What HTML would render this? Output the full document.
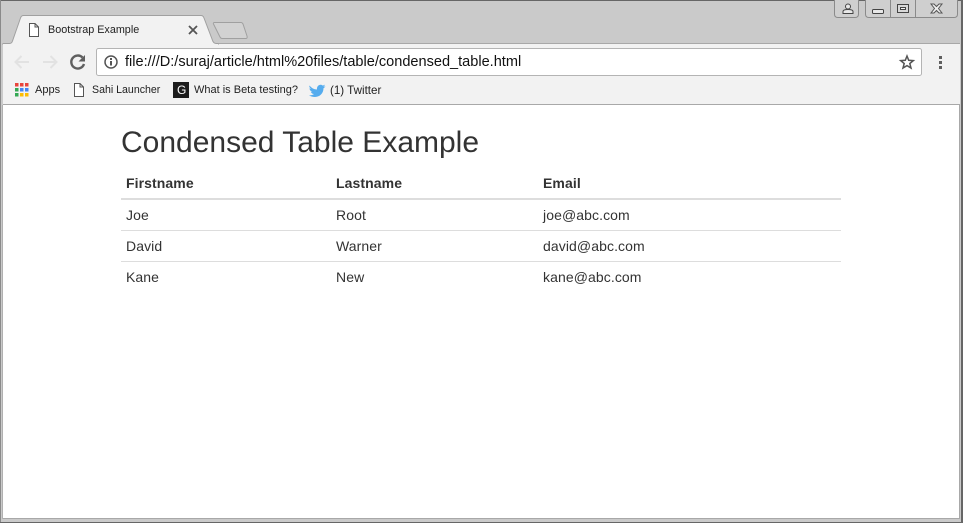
<!DOCTYPE html>
<html><head><meta charset="utf-8"><style>
html,body{margin:0;padding:0;width:964px;height:524px;overflow:hidden;background:#fff}
body{position:relative;font-family:"Liberation Sans",sans-serif}
.t{position:absolute;white-space:nowrap;line-height:1}
.b{color:#222;top:85px}
.c{font-size:14px;color:#333;letter-spacing:.09px}
.h{font-weight:bold}
.l{position:absolute;left:121px;width:720px;background:#ddd;height:1px}
</style></head><body>
<svg width="964" height="524" style="position:absolute;left:0;top:0">
<rect width="964" height="524" fill="#cacaca"/>
<rect x="0" y="0" width="963" height="1" fill="#666"/>
<rect x="0" y="0" width="1" height="523" fill="#8a8a8a"/>
<rect x="961" y="0" width="2" height="523" fill="#666"/>
<rect x="963" y="0" width="1" height="524" fill="#fff"/>
<rect x="3" y="43" width="957" height="62" fill="#f2f2f2"/>
<rect x="3" y="43" width="957" height="1" fill="#a8a8a8"/>
<path d="M3 43.500H9.500C11 43.500 12 42.500 12.500 41L20.500 18C21 16.500 22 15.500 23.500 15.500H201C202.500 15.500 203.500 16.500 204 18L212 39C212.700 41.500 214 43.500 216 43.500H218V44.500H3Z" fill="#f2f2f2" stroke="#a0a0a0"/>
<rect x="3" y="44" width="215" height="3" fill="#f2f2f2"/>
<path d="M214.500 22.500H241C242 22.500 242.500 23 243 24L247 36C247.500 37.500 247 38.500 246 38.500H222C221 38.500 220.500 38 220 37L213.500 24C213 23 213.500 22.500 214.500 22.500Z" fill="#d2d2d2" stroke="#a0a0a0"/>
<path d="M834.500 0V14C834.500 16.500 836 17.500 838 17.500H855C857 17.500 858.500 16.500 858.500 14V0" fill="#cfcfcf" stroke="#8a8a8a"/>
<path d="M865.500 0V14C865.500 16.500 867 17.500 869 17.500H954C956 17.500 957.500 16.500 957.500 14V0" fill="#cfcfcf" stroke="#8a8a8a"/>
<path d="M890.500 0V17M915.500 0V17" stroke="#8a8a8a"/>
<path d="M843 13.500H853V11.500C853 10 851 9.500 848 9.500C845 9.500 843 10 843 11.500ZM845.500 6.500A2.500 2.500 0 1 0 850.500 6.500A2.500 2.500 0 1 0 845.500 6.500Z" fill="#e8e8e8" stroke="#444" stroke-width="1"/>
<rect x="872.500" y="9.500" width="11" height="4" rx="1" fill="#e8e8e8" stroke="#444"/>
<rect x="897.500" y="4.500" width="11" height="8" fill="#d8d8d8" stroke="#444"/><rect x="900.500" y="7.500" width="5" height="2" fill="#f4f4f4" stroke="#444"/>
<path d="M931 4H934L936.500 6.500L939 4H942L938.500 8.500L942 13H939L936.500 10.500L934 13H931L934.500 8.500Z" fill="#eee" stroke="#555"/>
<path d="M29.500 23.500H35L38.500 27V36.500H29.500Z M35 23.500V27H38.500" fill="#fff" stroke="#555"/>
<path d="M189 26L197 34M197 26L189 34" stroke="#555" stroke-width="1.800"/>
<g fill="none" stroke="#e2e2e2" stroke-width="2"><path d="M29 62H16M21.500 56L15.500 62L21.500 68"/><path d="M43 62H56M50.500 56L56.500 62L50.500 68"/></g>
<path d="M82.500 57.500A6.500 6.500 0 1 0 84 64" fill="none" stroke="#5f5f5f" stroke-width="2.400"/><path d="M85 55V61.500H78.500Z" fill="#5f5f5f"/>
<rect x="96.500" y="48.500" width="825" height="27" rx="2" fill="#fff" stroke="#b4b4b4"/>
<circle cx="111" cy="62" r="6" fill="none" stroke="#555" stroke-width="1.500"/><rect x="110" y="61" width="2" height="4.500" fill="#555"/><rect x="110" y="58" width="2" height="2" fill="#555"/>
<path d="M907 56L908.700 60.300L913.300 60.600L909.800 63.500L911 68L907 65.600L903 68L904.200 63.500L900.700 60.600L905.300 60.300Z" fill="none" stroke="#555" stroke-width="1.500"/>
<g fill="#5f5f5f"><rect x="939" y="56" width="3" height="3"/><rect x="939" y="61" width="3" height="3"/><rect x="939" y="66" width="3" height="3"/></g>
<g>
<rect x="15" y="83" width="3.500" height="3.500" fill="#e8453c"/><rect x="20" y="83" width="3.500" height="3.500" fill="#e8453c"/><rect x="25" y="83" width="3.500" height="3.500" fill="#e8453c"/>
<rect x="15" y="88" width="3.500" height="3.500" fill="#34a853"/><rect x="20" y="88" width="3.500" height="3.500" fill="#4285f4"/><rect x="25" y="88" width="3.500" height="3.500" fill="#4285f4"/>
<rect x="15" y="93" width="3.500" height="3.500" fill="#34a853"/><rect x="20" y="93" width="3.500" height="3.500" fill="#fbbc05"/><rect x="25" y="93" width="3.500" height="3.500" fill="#fbbc05"/>
</g>
<path d="M74.500 83.500H80L83.500 87V96.500H74.500Z M80 83.500V87H83.500" fill="#fff" stroke="#555"/>
<rect x="173" y="82" width="16" height="16" fill="#1c1c1c"/>
<path d="M309.500 85.500C311.500 88 314 89.500 317 89.500C316.500 86 320 83.500 322.500 85.500C323.500 85.500 324.500 85 325 84.500C324.700 85.500 324 86.300 323.300 86.800C324 86.700 324.800 86.500 325.500 86.200C325 87 324.300 87.700 323.500 88.300C323.500 93 320 97 315 97C312.500 97 310.500 96.300 309 95.300C311 95.500 312.500 95 314 94C312.500 94 311.300 93 310.800 91.700C311.300 91.800 311.800 91.800 312.300 91.600C310.700 91.200 309.500 89.800 309.500 88.200C310 88.500 310.500 88.600 311 88.600C309.500 87.700 309 86.800 309.500 85.500Z" fill="#55acee"/>
<rect x="3" y="104" width="957" height="1" fill="#a8a8a8"/>
<rect x="3" y="105" width="956" height="413" fill="#fff"/>
<rect x="3" y="518" width="957" height="1" fill="#a8a8a8"/>
<rect x="959" y="105" width="1" height="414" fill="#a8a8a8"/>
<rect x="2" y="105" width="1" height="414" fill="#b0b0b0"/>
<rect x="0" y="522" width="963" height="1" fill="#666"/>
<rect x="0" y="523" width="964" height="1" fill="#fff"/>
</svg>
<div class="t" style="left:48px;top:25px;font-size:10.8px;color:#222">Bootstrap Example</div>
<div class="t" style="left:125px;top:55px;font-size:14.55px;color:#111">file:///D:/suraj/article/html%20files/table/condensed_table.html</div>
<div class="t b" style="left:35px;font-size:11px">Apps</div>
<div class="t b" style="left:92px;font-size:10.6px">Sahi Launcher</div>
<div class="t" style="left:177px;top:84px;font-size:12px;color:#fff">G</div>
<div class="t b" style="left:194px;font-size:11px">What is Beta testing?</div>
<div class="t b" style="left:330px;font-size:11.6px">(1) Twitter</div>
<div class="t" style="left:121px;top:128px;font-size:30px;color:#333">Condensed Table Example</div>
<div class="t c h" style="left:126px;top:176px">Firstname</div>
<div class="t c h" style="left:336px;top:176px">Lastname</div>
<div class="t c h" style="left:543px;top:176px">Email</div>
<div class="l" style="top:198px;height:2px"></div>
<div class="t c" style="left:126px;top:208px">Joe</div>
<div class="t c" style="left:336px;top:208px">Root</div>
<div class="t c" style="left:543px;top:208px">joe@abc.com</div>
<div class="l" style="top:230px"></div>
<div class="t c" style="left:126px;top:239px">David</div>
<div class="t c" style="left:336px;top:239px">Warner</div>
<div class="t c" style="left:543px;top:239px">david@abc.com</div>
<div class="l" style="top:261px"></div>
<div class="t c" style="left:126px;top:270px">Kane</div>
<div class="t c" style="left:336px;top:270px">New</div>
<div class="t c" style="left:543px;top:270px">kane@abc.com</div>
</body></html>
